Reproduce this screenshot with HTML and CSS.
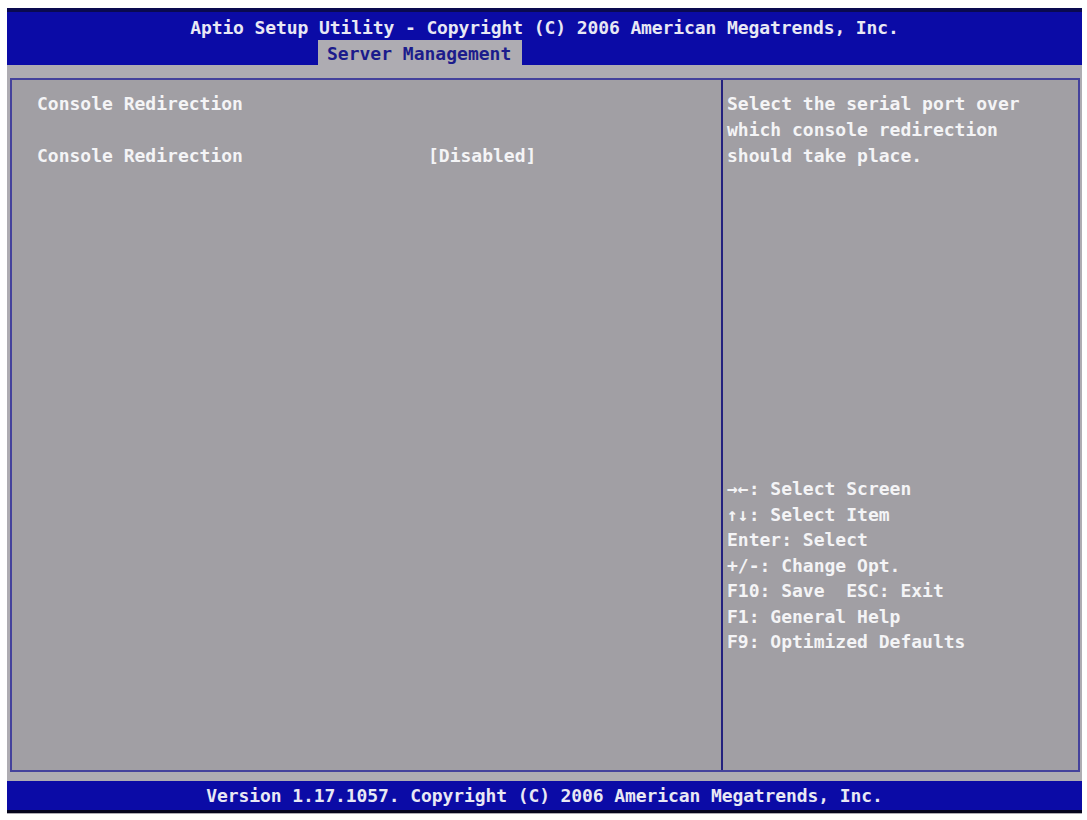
FILE: index.html
```html
<!DOCTYPE html>
<html lang="en">
<head>
  <meta charset="UTF-8">
  <meta name="viewport" content="width=device-width, initial-scale=1.0">
  <title>Aptio Setup Utility</title>
  <link rel="stylesheet" href="styles.css">
</head>
<body>
  <div class="screen">
    <header class="top-bar">
      <div class="title">Aptio Setup Utility - Copyright (C) 2006 American Megatrends, Inc.</div>
      <div class="tabs">
        <span class="tab">Server Management</span>
      </div>
    </header>
    <main class="panel">
      <section class="settings">
        <div class="heading">Console Redirection</div>
        <div class="item">
          <span class="item-label">Console Redirection</span>
          <span class="item-value">[Disabled]</span>
        </div>
      </section>
      <aside class="help">
        <p class="help-text">Select the serial port over<br>which console redirection<br>should take place.</p>
        <ul class="keys">
          <li>&rarr;&larr;: Select Screen</li>
          <li>&uarr;&darr;: Select Item</li>
          <li>Enter: Select</li>
          <li>+/-: Change Opt.</li>
          <li>F10: Save&nbsp; ESC: Exit</li>
          <li>F1: General Help</li>
          <li>F9: Optimized Defaults</li>
        </ul>
      </aside>
    </main>
    <footer class="bottom-bar">Version 1.17.1057. Copyright (C) 2006 American Megatrends, Inc.</footer>
  </div>
</body>
</html>
```

FILE: styles.css
```css
body {
  margin: 0;
  background-color: #ffffff;
  font-family: "DejaVu Sans Mono", "Liberation Mono", monospace;
  font-size: 18px;
  font-weight: bold;
}
.screen {
  display: flex;
  flex-direction: column;
  width: 1075px;
  height: 806px;
  margin: 8px 0 0 7px;
  background-color: #aeacb2;
}
.top-bar {
  height: 53px;
  border-top: 4px solid #0a0a50;
  background-color: #0b0ba6;
  color: #e8e8f4;
  text-align: center;
}
.title {
  padding-top: 4px;
  line-height: 24px;
  letter-spacing: -0.1px;
}
.tabs {
  padding-left: 311px;
  text-align: left;
}
.tab {
  display: inline-block;
  height: 25px;
  padding: 0 11px 0 9px;
  background-color: #aeacb2;
  color: #1c1c8c;
  line-height: 27px;
}
.panel {
  display: flex;
  height: 690px;
  margin: 13px 2px 0 3px;
  border: 2px solid #44429c;
  background-color: #a19fa4;
  color: #f4f4f6;
  line-height: 26px;
}
.settings {
  width: 684px;
  padding: 11px 0 0 25px;
  border-right: 2px solid #23217e;
}
.heading {
  margin-bottom: 26px;
}
.item {
  display: flex;
}
.item-label {
  width: 391px;
}
.help {
  flex: 1;
  padding: 11px 0 0 4px;
}
.help-text {
  margin: 0;
}
.keys {
  margin: 307px 0 0 0;
  padding: 0;
  list-style: none;
  line-height: 25.5px;
}
.bottom-bar {
  height: 29px;
  margin-top: 9px;
  border-bottom: 3px solid #05051e;
  background-color: #0b0ba6;
  color: #e8e8f4;
  line-height: 30px;
  letter-spacing: -0.1px;
  text-align: center;
}
```
